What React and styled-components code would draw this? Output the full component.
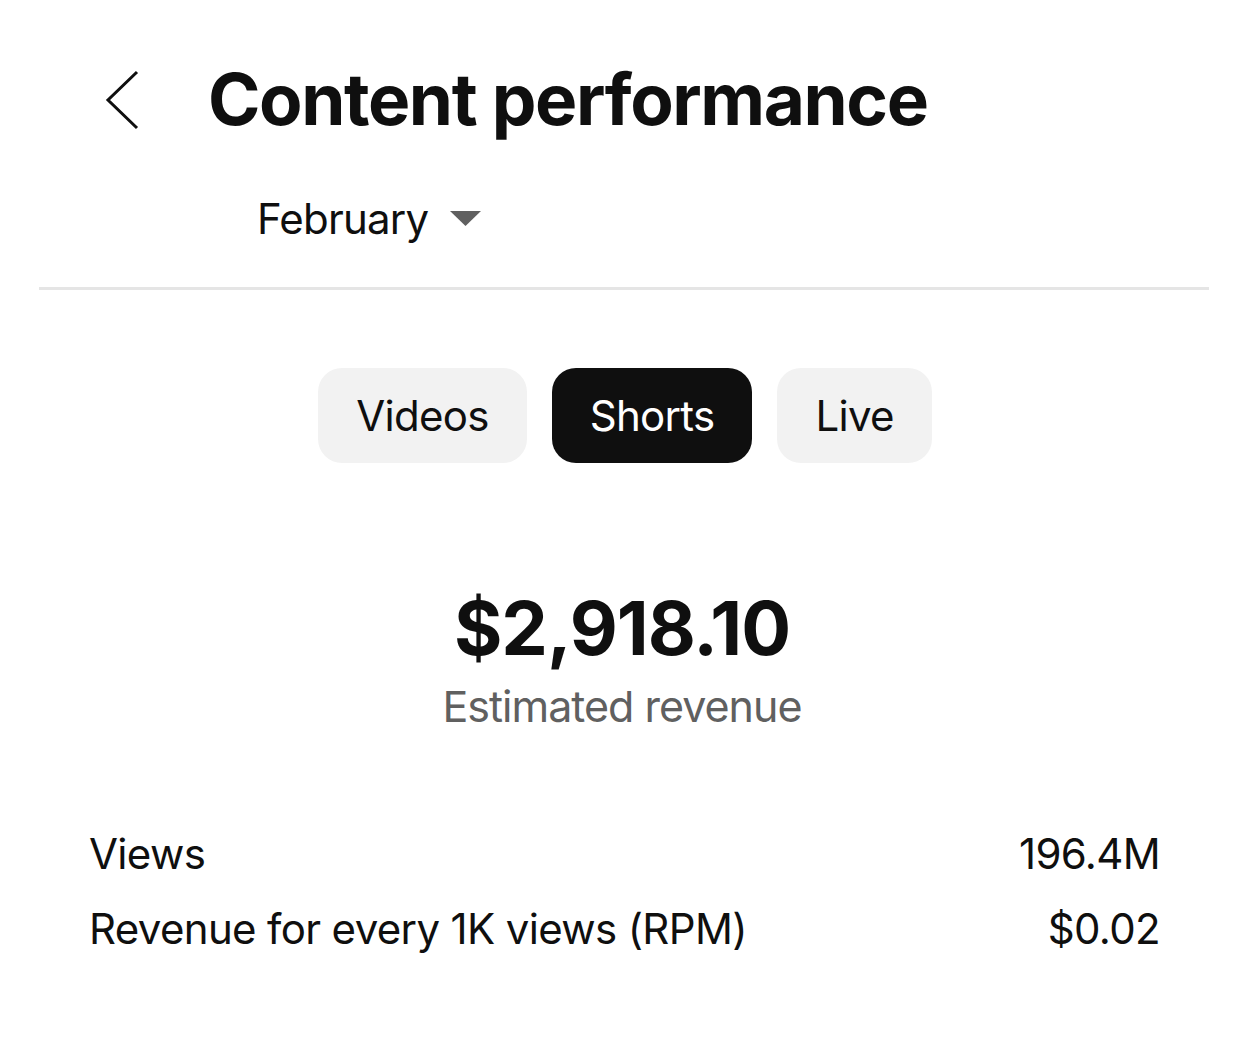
import React, { useState } from "react";
import styled, { createGlobalStyle } from "styled-components";

const GlobalStyle = createGlobalStyle`
  html, body {
    margin: 0;
    padding: 0;
    background: #ffffff;
    font-family: Inter, "Noto Sans", "Liberation Sans", sans-serif;
    color: #0f0f0f;
  }
`;

const Page = styled.div`
  width: 1242px;
  min-height: 1038px;
  box-sizing: border-box;
  padding: 0 33px 0 39px;
`;

const TitleRow = styled.header`
  display: flex;
  align-items: center;
  padding: 64px 0 0 66px;
`;

const BackButton = styled.button`
  border: none;
  background: none;
  padding: 0;
  width: 34px;
  height: 60px;
  display: flex;
  align-items: center;
  justify-content: center;
  cursor: pointer;
  margin-right: 69px;
`;

const Title = styled.h1`
  margin: 0;
  font-size: 71px;
  font-weight: 700;
  letter-spacing: -1.4px;
  line-height: 1;
`;

const MonthPicker = styled.button`
  display: flex;
  align-items: center;
  gap: 22px;
  border: none;
  background: none;
  padding: 0;
  margin: 58px 0 0 218px;
  font-family: inherit;
  font-size: 42px;
  letter-spacing: -0.8px;
  color: #0f0f0f;
  cursor: pointer;
`;

const Divider = styled.hr`
  border: none;
  height: 3px;
  background: #e5e5e5;
  margin: 43px 0 0;
  width: 1170px;
`;

const Tabs = styled.div`
  display: flex;
  justify-content: center;
  gap: 25px;
  margin-top: 78px;
  padding-left: 2px;
`;

const Tab = styled.button`
  height: 95px;
  padding: 0 38px;
  border: none;
  border-radius: 24px;
  background: ${(p) => (p.$active ? "#0f0f0f" : "#f2f2f2")};
  color: ${(p) => (p.$active ? "#ffffff" : "#0f0f0f")};
  font-family: inherit;
  font-size: 42px;
  letter-spacing: -0.7px;
  cursor: pointer;
`;

const Summary = styled.section`
  display: flex;
  flex-direction: column;
  align-items: center;
  margin-top: 128px;
  padding-right: 4px;
`;

const Amount = styled.div`
  font-size: 74px;
  font-weight: 700;
  line-height: 1;
  letter-spacing: -1px;
`;

const AmountLabel = styled.div`
  margin-top: 15px;
  font-size: 43px;
  letter-spacing: -1px;
  color: #606060;
`;

const Stats = styled.dl`
  margin: 95px 0 0;
  padding: 0 49px 0 50px;
  display: flex;
  flex-direction: column;
  gap: 22px;
`;

const StatRow = styled.div`
  display: flex;
  justify-content: space-between;
  align-items: baseline;
  font-size: 42px;
  line-height: 53px;
  letter-spacing: -0.65px;
`;

const StatName = styled.dt`
  margin: 0;
`;

const StatValue = styled.dd`
  margin: 0;
`;

function ChevronLeft() {
  return (
    <svg width="34" height="60" viewBox="0 0 34 60" fill="none">
      <path d="M32 2 L3 30 L32 58" stroke="#0f0f0f" strokeWidth="3" />
    </svg>
  );
}

function Caret() {
  return (
    <svg width="31" height="15" viewBox="0 0 31 15">
      <path d="M0 0 H31 L15.5 15 Z" fill="#606060" />
    </svg>
  );
}

const tabs = [
  { id: "videos", label: "Videos" },
  { id: "shorts", label: "Shorts" },
  { id: "live", label: "Live" },
];

const stats = [
  { name: "Views", value: "196.4M" },
  { name: "Revenue for every 1K views (RPM)", value: "$0.02" },
];

export default function App() {
  const [active, setActive] = useState("shorts");

  return (
    <Page>
      <GlobalStyle />
      <TitleRow>
        <BackButton aria-label="Back">
          <ChevronLeft />
        </BackButton>
        <Title>Content performance</Title>
      </TitleRow>
      <MonthPicker>
        February
        <Caret />
      </MonthPicker>
      <Divider />
      <Tabs>
        {tabs.map((t) => (
          <Tab
            key={t.id}
            $active={active === t.id}
            onClick={() => setActive(t.id)}
          >
            {t.label}
          </Tab>
        ))}
      </Tabs>
      <Summary>
        <Amount>$2,918.10</Amount>
        <AmountLabel>Estimated revenue</AmountLabel>
      </Summary>
      <Stats>
        {stats.map((s) => (
          <StatRow key={s.name}>
            <StatName>{s.name}</StatName>
            <StatValue>{s.value}</StatValue>
          </StatRow>
        ))}
      </Stats>
    </Page>
  );
}
